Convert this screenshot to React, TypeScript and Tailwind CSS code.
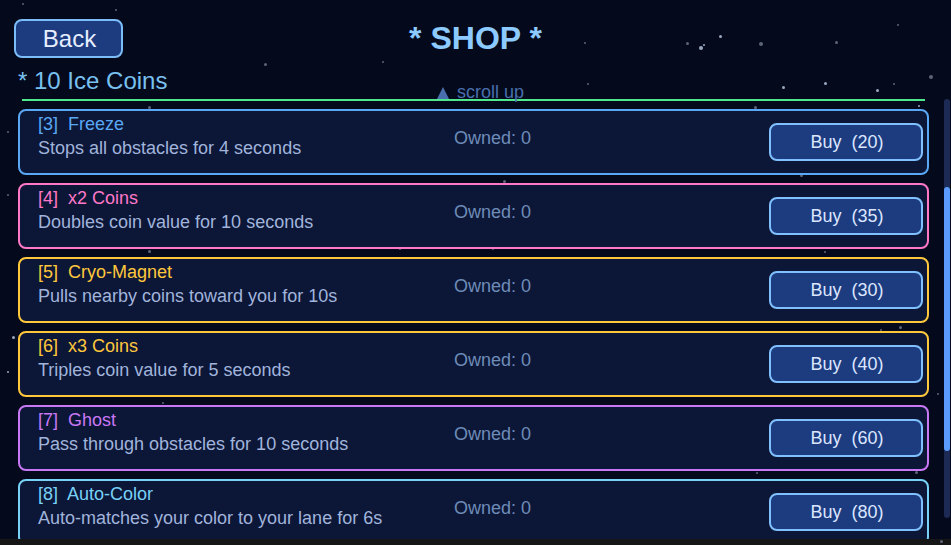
import React from 'react';

type Item = {
  key: number;
  name: string;
  desc: string;
  price: number;
  border: string;
  text: string;
};

const items: Item[] = [
  { key: 3, name: 'Freeze', desc: 'Stops all obstacles for 4 seconds', price: 20, border: 'border-[#5aa8f5]', text: 'text-[#5aa8f5]' },
  { key: 4, name: 'x2 Coins', desc: 'Doubles coin value for 10 seconds', price: 35, border: 'border-[#ff78c8]', text: 'text-[#ff78c8]' },
  { key: 5, name: 'Cryo-Magnet', desc: 'Pulls nearby coins toward you for 10s', price: 30, border: 'border-[#ffc83c]', text: 'text-[#ffc83c]' },
  { key: 6, name: 'x3 Coins', desc: 'Triples coin value for 5 seconds', price: 40, border: 'border-[#ffc83c]', text: 'text-[#ffc83c]' },
  { key: 7, name: 'Ghost', desc: 'Pass through obstacles for 10 seconds', price: 60, border: 'border-[#c878f5]', text: 'text-[#c878f5]' },
  { key: 8, name: 'Auto-Color', desc: 'Auto-matches your color to your lane for 6s', price: 80, border: 'border-[#78d2f8]', text: 'text-[#78d2f8]' },
];

// [x, y, size, bright]
const stars: [number, number, number, boolean][] = [
  [23, 4, 2, false], [116, 10, 2, false], [265, 64, 3, false], [383, 62, 2, false],
  [585, 43, 2, false], [588, 84, 2, false], [687, 43, 3, false], [701, 48, 4, true],
  [704, 45, 2, true], [720, 36, 3, true], [761, 44, 4, false], [836, 42, 3, false],
  [898, 25, 2, false], [931, 77, 4, false], [825, 83, 3, true], [783, 87, 3, true],
  [877, 90, 3, true], [894, 84, 2, false], [919, 106, 2, true], [8, 132, 2, false],
  [8, 195, 2, false], [149, 107, 3, false], [149, 251, 3, false], [13, 337, 3, true],
  [8, 372, 2, true], [163, 403, 2, false], [755, 107, 3, false], [801, 175, 3, false],
  [825, 252, 2, false], [900, 327, 3, false], [881, 330, 2, false], [938, 394, 2, false],
  [504, 181, 3, false], [400, 249, 2, false], [493, 249, 2, false], [757, 473, 2, false],
  [916, 472, 3, false], [916, 463, 3, false], [941, 541, 3, false],
];

const ShopCard: React.FC<{ item: Item }> = ({ item }) => (
  <div className={`flex h-[66px] shrink-0 rounded-[8px] border-2 bg-[#0c1636] ${item.border}`}>
    <div className="flex w-[434px] flex-col gap-[2px] pl-[18px] pt-[2px] text-[18px] leading-[22px]">
      <div className={`whitespace-pre ${item.text}`}>{`[${item.key}]  ${item.name}`}</div>
      <div className="whitespace-pre text-[#a0b4dc]">{item.desc}</div>
    </div>
    <div className="mt-[16px] text-[18px] leading-[22px] text-[#6e8cb8]">Owned: 0</div>
    <div className="flex-1" />
    <button className="mr-[4px] mt-[12px] flex h-[38px] w-[154px] items-center justify-center whitespace-pre rounded-[8px] border-2 border-[#80c0ff] bg-[#1d3c80] pl-[2px] text-[18px] leading-[22px] text-[#dce6ff]">
      {`Buy  (${item.price})`}
    </button>
  </div>
);

export default function App() {
  return (
    <div className="relative h-[545px] w-[951px] overflow-hidden bg-[#040a1c] font-['Liberation_Sans',Arial,sans-serif]">
      {stars.map(([x, y, s, b], i) => (
        <div
          key={i}
          className={`absolute rounded-full ${b ? 'bg-[#9aa8c0]' : 'bg-[#5c6478]'}`}
          style={{ left: x - s / 2, top: y - s / 2, width: s, height: s }}
        />
      ))}

      <div className="relative z-10 flex h-[539px] flex-col overflow-hidden">
        <div className="grid grid-cols-[1fr_auto_1fr] items-center px-[14px] pt-[19px]">
          <div>
            <button className="flex h-[39px] w-[109px] items-center justify-center rounded-[8px] border-2 border-[#7cbcf8] bg-[#1d3c80] pl-[2px] text-[24px] leading-[28px] text-[#e6eeff]">
              Back
            </button>
          </div>
          <div className="text-[32px] font-bold leading-[37px] text-[#8ccaff]">* SHOP *</div>
          <div />
        </div>

        <div className="mt-[9px] pl-[18px] text-[24px] leading-[28px] text-[#78c0f0]">* 10 Ice Coins</div>

        <div className="mt-[4px] flex pl-[18px]">
          <div className="flex w-[911px] flex-col">
            <div className="relative mx-[4px] h-[2px] bg-[#50e68c]">
              <div className="absolute left-[415px] top-[-17px] flex items-center gap-[8px] whitespace-pre text-[18px] leading-[20px] text-[#4a6fae]">
                <svg width="12" height="12" viewBox="0 0 12 12" className="mt-[2px]">
                  <path d="M6 0 L12 12 L0 12 Z" fill="#4a6fae" />
                </svg>
                <span>scroll up</span>
              </div>
            </div>
            <div className="mt-[8px] flex flex-col gap-[8px]">
              {items.map((it) => (
                <ShopCard key={it.key} item={it} />
              ))}
            </div>
          </div>
          <div className="ml-[15px] flex h-[419px] w-[6px] flex-col rounded-full bg-[#1c2a55]">
            <div className="mt-[88px] h-[264px] w-[6px] rounded-full bg-[#5b9bff]" />
          </div>
        </div>
      </div>

      <div className="h-[6px] bg-[#161616]" />
    </div>
  );
}
